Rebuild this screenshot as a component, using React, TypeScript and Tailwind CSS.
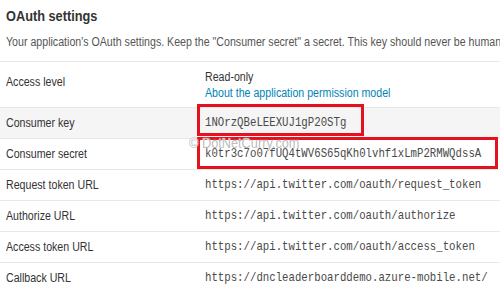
import React from "react";

const sans = { fontFamily: "'Liberation Sans', Arial, sans-serif" };
const mono = { fontFamily: "'Liberation Mono', 'Courier New', monospace" };

type Row = { label: string; value: string; bg?: boolean };

const rows: Row[] = [
  { label: "Consumer key", value: "1NOrzQBeLEEXUJ1gP20STg", bg: true },
  { label: "Consumer secret", value: "k0tr3c7o07fUQ4tWV6S65qKh0lvhf1xLmP2RMWQdssA" },
  { label: "Request token URL", value: "https://api.twitter.com/oauth/request_token" },
  { label: "Authorize URL", value: "https://api.twitter.com/oauth/authorize" },
  { label: "Access token URL", value: "https://api.twitter.com/oauth/access_token" },
  { label: "Callback URL", value: "https://dncleaderboarddemo.azure-mobile.net/" },
];

const sq = "inline-block origin-left scale-x-85 whitespace-nowrap";

export default function App() {
  return (
    <div className="relative w-[500px] h-[292px] overflow-hidden bg-white" style={sans}>
      <div className="px-[6px] overflow-hidden">
        <div className="h-[32px] flex items-center text-[15px] font-bold text-[#333]">
          <span className={sq}>OAuth settings</span>
        </div>
        <div className="h-[20px] leading-[20px] text-[12.5px] text-[#555]">
          <span className={sq}>
            Your application's OAuth settings. Keep the "Consumer secret" a secret. This key should never be human-readable in your application.
          </span>
        </div>
      </div>
      <div className="mt-[9px] border-t border-[#e8e8e8]">
        <div className="flex h-[46px] border-b border-[#e8e8e8] text-[12.5px] leading-[16px]">
          <div className="w-[205px] shrink-0 pl-[6px] pt-[12px] text-[#333]">
            <span className={sq}>Access level</span>
          </div>
          <div className="pt-[7px] flex flex-col">
            <span className={`${sq} text-[#333]`}>Read-only</span>
            <span className={`${sq} text-[#0084b4]`}>About the application permission model</span>
          </div>
        </div>
        {rows.map((r) => (
          <div
            key={r.label}
            className={`flex items-center h-[31px] border-b border-[#e8e8e8] ${r.bg ? "bg-[#f5f5f5]" : "bg-white"}`}
          >
            <div className="w-[205px] shrink-0 pl-[6px] text-[12.5px] text-[#333]">
              <span className={sq}>{r.label}</span>
            </div>
            <div className="min-w-0 text-[12.6px] text-[#4a4a4a]" style={mono}>
              <span className={sq}>{r.value}</span>
            </div>
          </div>
        ))}
      </div>
      <div className="absolute left-[197px] top-[104px] w-[167px] h-[32px] border-[3px] border-[#e5111e]" />
      <div className="absolute left-[197px] top-[137px] w-[301px] h-[32px] border-[3px] border-[#e5111e]" />
      <div className="absolute left-[189px] top-[134px] text-[15px] leading-[18px] text-[#b4b4b4]/90 [text-shadow:0_0_1px_#fff,0_0_1px_#fff]">
        <span className={sq}>© DotNetCurry.com</span>
      </div>
    </div>
  );
}
